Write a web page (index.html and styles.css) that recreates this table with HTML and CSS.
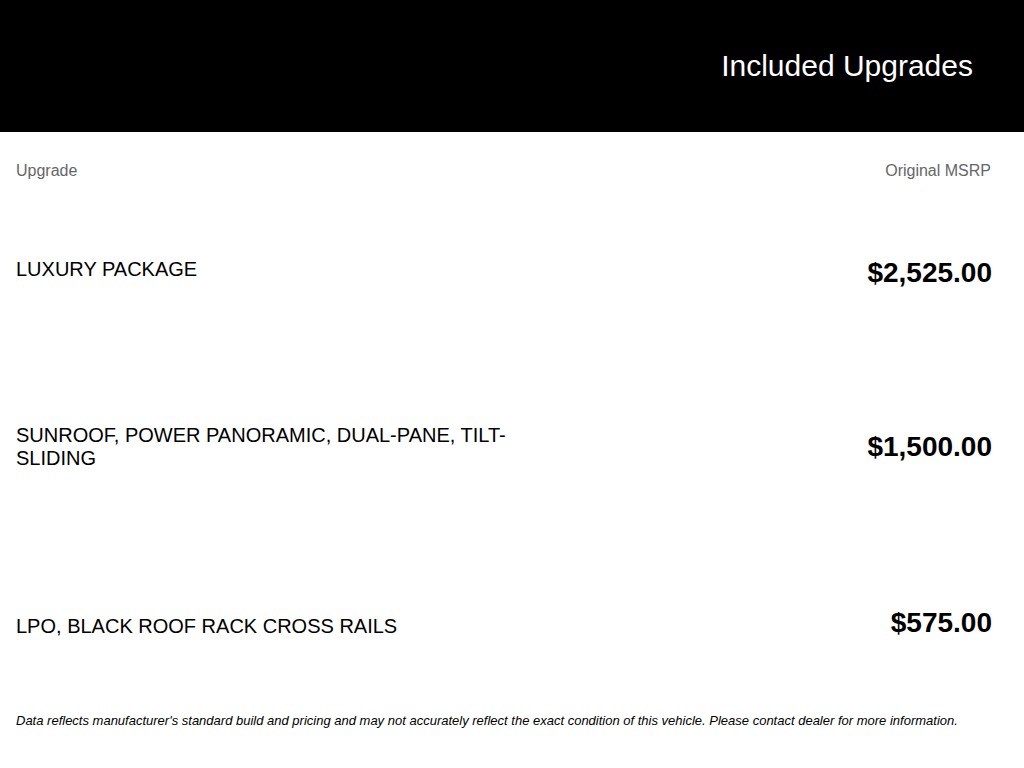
FILE: index.html
```html
<!DOCTYPE html>
<html lang="en">
<head>
<meta charset="utf-8">
<title>Included Upgrades</title>
<link rel="stylesheet" href="styles.css">
</head>
<body>
<header class="hero">
  <h1 class="hero-title">Included Upgrades</h1>
</header>
<main class="upgrades">
  <div class="cols">
    <span>Upgrade</span>
    <span class="cols-right">Original MSRP</span>
  </div>
  <div class="row row-top row-1">
    <div class="label">LUXURY PACKAGE</div>
    <div class="price">$2,525.00</div>
  </div>
  <div class="row row-center row-2">
    <div class="label">SUNROOF, POWER PANORAMIC, DUAL-PANE, TILT-SLIDING</div>
    <div class="price">$1,500.00</div>
  </div>
  <div class="row row-top row-3">
    <div class="label">LPO, BLACK ROOF RACK CROSS RAILS</div>
    <div class="price">$575.00</div>
  </div>
  <p class="disclaimer">Data reflects manufacturer's standard build and pricing and may not accurately reflect the exact condition of this vehicle. Please contact dealer for more information.</p>
</main>
</body>
</html>
```

FILE: styles.css
```css
html, body {
  margin: 0;
  padding: 0;
  background: #fff;
  font-family: "Liberation Sans", Arial, sans-serif;
  color: #000;
}

.hero {
  height: 132px;
  background: #000;
  display: flex;
  align-items: center;
  justify-content: flex-end;
  padding-right: 51px;
}

.hero-title {
  margin: 0;
  color: #fff;
  font-size: 30px;
  font-weight: normal;
  line-height: 34px;
}

.upgrades {
  padding: 0 32px 0 16px;
}

.cols {
  display: flex;
  justify-content: space-between;
  padding-top: 30px;
  font-size: 16px;
  line-height: 18px;
  color: #666;
}

.cols-right {
  margin-right: 1px;
}

.row {
  display: flex;
  justify-content: space-between;
}

.row-top { align-items: flex-start; }
.row-center { align-items: center; }

.row-1 { margin-top: 77px; }
.row-1 .label { padding-top: 1px; }
.row-2 { margin-top: 135px; }
.row-3 { margin-top: 137px; }
.row-3 .label { padding-top: 8px; }

.label {
  width: 520px;
  font-size: 20px;
  line-height: 23px;
}

.price {
  font-size: 28px;
  line-height: 32px;
  font-weight: bold;
}

.disclaimer {
  margin: 74px 0 0;
  font-size: 13px;
  line-height: 15px;
  font-style: italic;
}
```
